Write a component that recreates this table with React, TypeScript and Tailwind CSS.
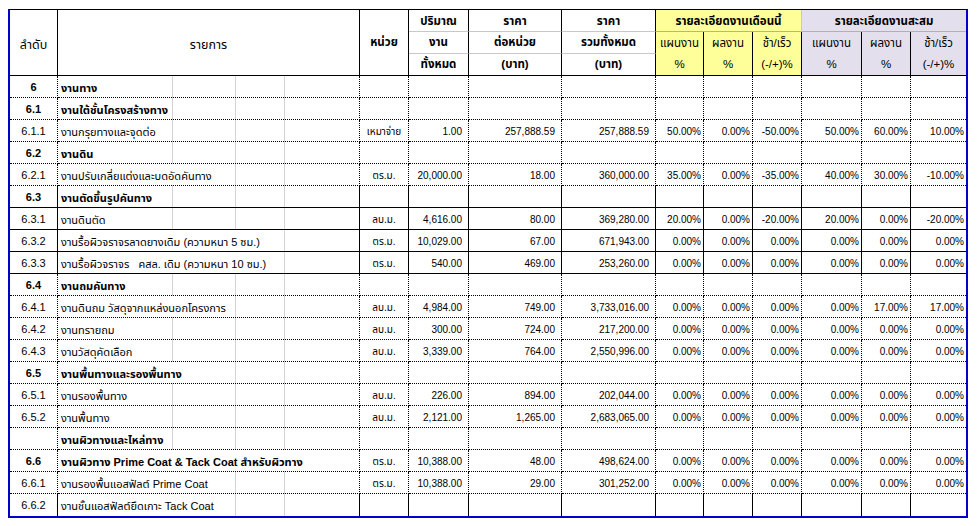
import React from "react"

type Row = {
  code: string
  name: string
  unit?: string
  qty?: string
  price?: string
  total?: string
  pct?: string[]
  bold?: boolean
  solid?: boolean
}

const zero = ["0.00%", "0.00%", "0.00%", "0.00%", "0.00%", "0.00%"]

const rows: Row[] = [
  { code: "6", name: "งานทาง", bold: true },
  { code: "6.1", name: "งานใต้ชั้นโครงสร้างทาง", bold: true },
  {
    code: "6.1.1",
    name: "งานกรุยทางและจุดต่อ",
    unit: "เหมาจ่าย",
    qty: "1.00",
    price: "257,888.59",
    total: "257,888.59",
    pct: ["50.00%", "0.00%", "-50.00%", "50.00%", "60.00%", "10.00%"],
  },
  { code: "6.2", name: "งานดิน", bold: true },
  {
    code: "6.2.1",
    name: "งานปรับเกลี่ยแต่งและบดอัดคันทาง",
    unit: "ตร.ม.",
    qty: "20,000.00",
    price: "18.00",
    total: "360,000.00",
    pct: ["35.00%", "0.00%", "-35.00%", "40.00%", "30.00%", "-10.00%"],
  },
  { code: "6.3", name: "งานตัดขึ้นรูปคันทาง", bold: true, solid: true },
  {
    code: "6.3.1",
    name: "งานดินตัด",
    unit: "ลบ.ม.",
    qty: "4,616.00",
    price: "80.00",
    total: "369,280.00",
    pct: ["20.00%", "0.00%", "-20.00%", "20.00%", "0.00%", "-20.00%"],
    solid: true,
  },
  {
    code: "6.3.2",
    name: "งานรื้อผิวจราจรลาดยางเดิม (ความหนา 5 ซม.)",
    unit: "ตร.ม.",
    qty: "10,029.00",
    price: "67.00",
    total: "671,943.00",
    pct: zero,
    solid: true,
  },
  {
    code: "6.3.3",
    name: "งานรื้อผิวจราจร\u00a0\u00a0 คสล. เดิม (ความหนา 10 ซม.)",
    unit: "ตร.ม.",
    qty: "540.00",
    price: "469.00",
    total: "253,260.00",
    pct: zero,
    solid: true,
  },
  { code: "6.4", name: "งานถมคันทาง", bold: true },
  {
    code: "6.4.1",
    name: "งานดินถม วัสดุจากแหล่งนอกโครงการ",
    unit: "ลบ.ม.",
    qty: "4,984.00",
    price: "749.00",
    total: "3,733,016.00",
    pct: ["0.00%", "0.00%", "0.00%", "0.00%", "17.00%", "17.00%"],
  },
  {
    code: "6.4.2",
    name: "งานทรายถม",
    unit: "ลบ.ม.",
    qty: "300.00",
    price: "724.00",
    total: "217,200.00",
    pct: zero,
  },
  {
    code: "6.4.3",
    name: "งานวัสดุคัดเลือก",
    unit: "ลบ.ม.",
    qty: "3,339.00",
    price: "764.00",
    total: "2,550,996.00",
    pct: zero,
  },
  { code: "6.5", name: "งานพื้นทางและรองพื้นทาง", bold: true },
  {
    code: "6.5.1",
    name: "งานรองพื้นทาง",
    unit: "ลบ.ม.",
    qty: "226.00",
    price: "894.00",
    total: "202,044.00",
    pct: zero,
  },
  {
    code: "6.5.2",
    name: "งานพื้นทาง",
    unit: "ลบ.ม.",
    qty: "2,121.00",
    price: "1,265.00",
    total: "2,683,065.00",
    pct: zero,
  },
  { code: "", name: "งานผิวทางและไหล่ทาง", bold: true },
  {
    code: "6.6",
    name: "งานผิวทาง Prime Coat & Tack Coat สำหรับผิวทาง",
    unit: "ตร.ม.",
    qty: "10,388.00",
    price: "48.00",
    total: "498,624.00",
    pct: zero,
    bold: true,
  },
  {
    code: "6.6.1",
    name: "งานรองพื้นแอสฟัลต์ Prime Coat",
    unit: "ตร.ม.",
    qty: "10,388.00",
    price: "29.00",
    total: "301,252.00",
    pct: zero,
  },
  { code: "6.6.2", name: "งานชั้นแอสฟัลต์ยึดเกาะ Tack Coat" },
]

const font =
  "font-['Tahoma','Liberation_Sans','Noto_Sans_Thai','Noto_Sans_Thai_UI','Loma','Garuda','Tlwg_Typo','Waree','Norasi',sans-serif]"

// excel gridlines that show through the wide item column
const grid =
  "bg-[linear-gradient(to_right,transparent_114px,#d4d4d4_114px,#d4d4d4_115px,transparent_115px,transparent_177px,#d4d4d4_177px,#d4d4d4_178px,transparent_178px,transparent_226px,#d4d4d4_226px,#d4d4d4_227px,transparent_227px)]"

function HeadPair({ top, bottom, bg, last }: { top: string; bottom: string; bg: string; last?: boolean }) {
  return (
    <div
      className={`row-span-2 flex flex-col border-b border-black ${last ? "" : "border-r"} ${bg}`}
    >
      <div className="flex h-[22px] items-center justify-center pt-[2px]">{top}</div>
      <div className="flex h-[22px] items-center justify-center">{bottom}</div>
    </div>
  )
}

export default function App() {
  return (
    <div className={`min-h-screen bg-white pt-[9px] text-black ${font}`}>
      <div className="ml-2 grid w-[960px] auto-rows-[22px] grid-cols-[48px_302px_49px_60px_93px_94px_48px_49px_49px_60px_49px_55px] border-t border-r-2 border-b-2 border-l-2 border-t-black border-r-[#0000c8] border-b-[#0000c8] border-l-[#0000c8] text-[11.5px]">
        {/* header */}
        <div className="row-span-3 flex items-center justify-center border-r border-b border-black pt-[6px] text-[12.5px]">
          ลำดับ
        </div>
        <div className="row-span-3 flex items-center justify-center border-r border-b border-black pt-[6px] text-[12.5px]">
          รายการ
        </div>
        <div className="row-span-3 flex items-center justify-center border-r border-b border-black font-bold">
          หน่วย
        </div>
        <div className="flex items-center justify-center border-r border-b border-r-black border-b-[#c8c8c8] pt-[2px] font-bold">
          ปริมาณ
        </div>
        <div className="flex items-center justify-center border-r border-b border-r-black border-b-[#c8c8c8] pt-[2px] font-bold">
          ราคา
        </div>
        <div className="flex items-center justify-center border-r border-b border-r-black border-b-[#c8c8c8] pt-[2px] font-bold">
          ราคา
        </div>
        <div className="col-span-3 flex items-center justify-center border-r border-b border-r-[#c8c8c8] border-b-[#b0b0b0] bg-[#ffff99] pt-[2px] font-bold">
          รายละเอียดงานเดือนนี้
        </div>
        <div className="col-span-3 flex items-center justify-center border-b border-b-[#b0b0b0] bg-[#e4dfec] pt-[2px] font-bold">
          รายละเอียดงานสะสม
        </div>

        <div className="flex items-center justify-center border-r border-b border-r-black border-b-[#c8c8c8] font-bold">
          งาน
        </div>
        <div className="flex items-center justify-center border-r border-b border-r-black border-b-[#c8c8c8] font-bold">
          ต่อหน่วย
        </div>
        <div className="flex items-center justify-center border-r border-b border-r-black border-b-[#c8c8c8] font-bold">
          รวมทั้งหมด
        </div>
        <HeadPair top="แผนงาน" bottom="%" bg="bg-[#ffff99]" />
        <HeadPair top="ผลงาน" bottom="%" bg="bg-[#ffff99]" />
        <HeadPair top="ช้า/เร็ว" bottom="(-/+)%" bg="bg-[#ffff99]" />
        <HeadPair top="แผนงาน" bottom="%" bg="bg-[#e4dfec]" />
        <HeadPair top="ผลงาน" bottom="%" bg="bg-[#e4dfec]" />
        <HeadPair top="ช้า/เร็ว" bottom="(-/+)%" bg="bg-[#e4dfec]" last />

        <div className="flex items-center justify-center border-r border-b border-black font-bold">
          ทั้งหมด
        </div>
        <div className="flex items-center justify-center border-r border-b border-black font-bold">
          (บาท)
        </div>
        <div className="flex items-center justify-center border-r border-b border-black font-bold">
          (บาท)
        </div>

        {/* body */}
        {rows.map((r, i) => {
          const isLast = i === rows.length - 1
          const line = isLast ? "" : r.solid ? "border-b border-solid border-black" : "border-b border-dotted border-black"
          const cell = `flex items-center border-r border-r-black border-r-solid ${line} pt-[1px] whitespace-nowrap`
          const w = r.bold ? "font-bold" : ""
          const pct = r.pct ?? ["", "", "", "", "", ""]
          return (
            <React.Fragment key={i}>
              <div className={`${cell} justify-center text-[11px] ${w}`}>{r.code}</div>
              <div className={`${cell.replace("pt-[1px] ", "")} items-stretch overflow-visible ${grid}`}>
                <span className={`relative z-10 flex items-center bg-white pt-[3px] pr-[3px] pl-[3px] text-[11px] ${w}`}>
                  {r.name}
                </span>
              </div>
              <div className={`${cell} justify-center text-[10px]`}>{r.unit}</div>
              <div className={`${cell} justify-end pr-[6px] text-[10px]`}>{r.qty}</div>
              <div className={`${cell} justify-end pr-[6px] text-[10px]`}>{r.price}</div>
              <div className={`${cell} justify-end pr-[6px] text-[10px]`}>{r.total}</div>
              {pct.map((p, j) => (
                <div
                  key={j}
                  className={`${j === 5 ? cell.replace("border-r border-r-black border-r-solid ", "") : cell} justify-end pr-[2px] text-[10px]`}
                >
                  {p}
                </div>
              ))}
            </React.Fragment>
          )
        })}
      </div>
    </div>
  )
}
